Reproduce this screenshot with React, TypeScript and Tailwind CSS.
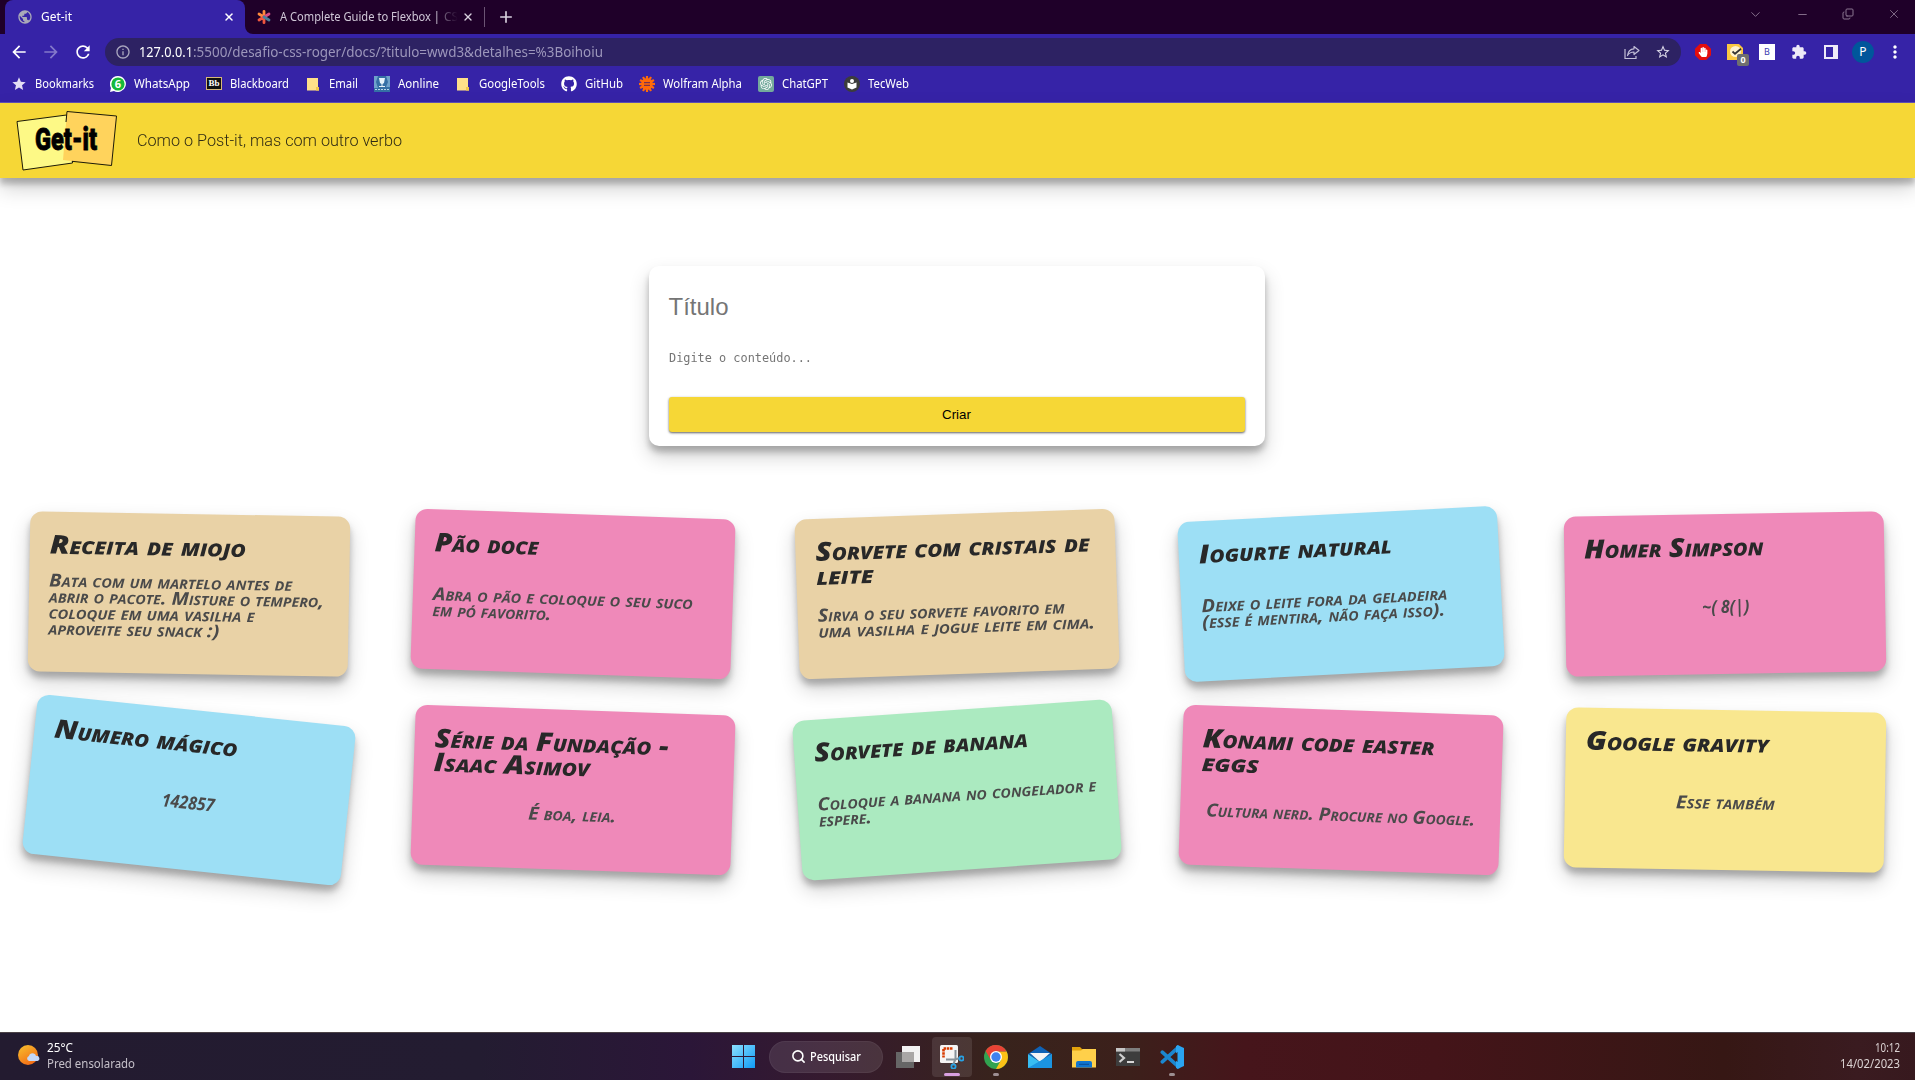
import { useLayoutEffect, useRef, useState, type ReactNode } from "react";
import { MdArrowBack, MdArrowForward, MdExtension, MdInfoOutline, MdMoreVert, MdPublic, MdRefresh, MdStar, MdStarBorder } from "react-icons/md";
import { FaGithub, FaHandPaper } from "react-icons/fa";
import { SiOpenai } from "react-icons/si";
import { ChevronDown, Copy, Minus, Plus, Search, X } from "lucide-react";

/** One line of text stretched or squeezed to an exact width. */
function Fit({ w, children, className = "" }: { w: number; children: ReactNode; className?: string }) {
  const ref = useRef<HTMLSpanElement>(null);
  const [scale, setScale] = useState(1);
  useLayoutEffect(() => {
    if (ref.current) setScale(w / parseFloat(getComputedStyle(ref.current).width));
  }, [w]);
  return (
    <span className={"block shrink-0 whitespace-pre " + className} style={{ width: w }}>
      <span ref={ref} className="inline-block origin-left" style={{ transform: `scaleX(${scale})` }}>
        {children}
      </span>
    </span>
  );
}

type Line = [string, number];

const notes: { bg: string; rot: string; title: Line[]; body: Line[] }[] = [
  {
    bg: "bg-[#e9d2a6]", rot: "rotate-[1deg]",
    title: [["Receita de miojo", 196]],
    body: [["Bata com um martelo antes de", 243], ["abrir o pacote. Misture o tempero,", 275], ["coloque em uma vasilha e", 206], ["aproveite seu snack :)", 171]],
  },
  {
    bg: "bg-[#ef89b9]", rot: "rotate-[2deg]",
    title: [["Pão doce", 104]],
    body: [["Abra o pão e coloque o seu suco", 260], ["em pó favorito.", 119]],
  },
  {
    bg: "bg-[#e9d2a6]", rot: "rotate-[-2deg]",
    title: [["Sorvete com cristais de", 274], ["leite", 57]],
    body: [["Sirva o seu sorvete favorito em", 247], ["uma vasilha e jogue leite em cima.", 277]],
  },
  {
    bg: "bg-[#9ddff5]", rot: "rotate-[-3deg]",
    title: [["Iogurte natural", 193]],
    body: [["Deixe o leite fora da geladeira", 246], ["(esse é mentira, não faça isso).", 243]],
  },
  {
    bg: "bg-[#ef89b9]", rot: "rotate-[-1deg]",
    title: [["Homer Simpson", 179]],
    body: [["~( 8(|)", 47]],
  },
  {
    bg: "bg-[#9ddff5]", rot: "rotate-[6deg]",
    title: [["Numero mágico", 184]],
    body: [["142857", 53]],
  },
  {
    bg: "bg-[#ef89b9]", rot: "rotate-[2deg]",
    title: [["Série da Fundação -", 234], ["Isaac Asimov", 156]],
    body: [["É boa, leia.", 88]],
  },
  {
    bg: "bg-[#abeac0]", rot: "rotate-[-4deg]",
    title: [["Sorvete de banana", 214]],
    body: [["Coloque a banana no congelador e", 279], ["espere.", 53]],
  },
  {
    bg: "bg-[#ef89b9]", rot: "rotate-[2deg]",
    title: [["Konami code easter", 232], ["eggs", 57]],
    body: [["Cultura nerd. Procure no Google.", 269]],
  },
  {
    bg: "bg-[#f9e78f]", rot: "rotate-[1deg]",
    title: [["Google gravity", 183]],
    body: [["Esse também", 99]],
  },
];

const Folder = () => (
  <svg viewBox="0 0 16 16" className="size-4">
    <path d="M2 2h11v9.500l1 .5v2.500H2z" fill="#ffe08a" />
    <path d="M11 11h3v3.500h-3z" fill="#f3c84b" />
  </svg>
);

const Bolt = () => (
  <svg viewBox="0 0 16 16" className="size-4">
    <g fill="#ff6a0a">
      <circle cx="8" cy="8" r="5.900" />
      {[0, 30, 60, 90, 120, 150].map((a) => (
        <rect key={a} x="6.900" y="0" width="2.200" height="16" transform={`rotate(${a} 8 8)`} />
      ))}
    </g>
    <path d="M5 6.700h6M5 9.300h6" stroke="#5b2464" strokeWidth="1" />
  </svg>
);

const bookmarks: { label: string; w: number; icon: ReactNode }[] = [
  { label: "Bookmarks", w: 59, icon: <MdStar className="size-4 text-[#e4dff5]" /> },
  {
    label: "WhatsApp", w: 56,
    icon: (
      <svg viewBox="0 0 16 16" className="size-4">
        <path d="M8 0a8 8 0 1 1-4 15L0 16l1-4A8 8 0 0 1 8 0z" fill="#fff" />
        <circle cx="8" cy="8" r="6.600" fill="#17b939" />
        <text x="8" y="11.800" textAnchor="middle" fontSize="11" fontWeight="700" fill="#fff" fontFamily="Open Sans, sans-serif">6</text>
      </svg>
    ),
  },
  {
    label: "Blackboard", w: 59,
    icon: (
      <span className="flex h-[13px] w-4 items-center justify-center border border-[#d8b878] bg-[#101010] font-['Liberation_Serif',serif] text-[9px] leading-none font-bold text-white">Bb</span>
    ),
  },
  { label: "Email", w: 29, icon: <Folder /> },
  {
    label: "Aonline", w: 41,
    icon: (
      <svg viewBox="0 0 16 16" className="size-4">
        <rect width="16" height="16" fill="#356fa5" />
        <path d="M0 0h4L2 6 4 12H0zM12 0h4v11h-4l2-5z" fill="#6fa2cb" />
        <path d="M5 2h6l-1 5-1.500 1v2H11v1H5v-1h2.500V8L6 7z" fill="#e6f2fa" />
        <path d="M1 13.500h14" stroke="#b6d5ea" strokeDasharray="2 1" />
      </svg>
    ),
  },
  { label: "GoogleTools", w: 66, icon: <Folder /> },
  { label: "GitHub", w: 38, icon: <FaGithub className="size-4 text-white" /> },
  { label: "Wolfram Alpha", w: 79, icon: <Bolt /> },
  {
    label: "ChatGPT", w: 46,
    icon: (
      <span className="flex size-4 items-center justify-center rounded-[2px] bg-[#74aa9c]">
        <SiOpenai className="size-3 text-white" />
      </span>
    ),
  },
  {
    label: "TecWeb", w: 41,
    icon: (
      <svg viewBox="0 0 16 16" className="size-4">
        <circle cx="8" cy="8" r="8" fill="#3c3c3c" />
        <path d="M3.500 6.500 8 8l4.500-1.500v5L8 13.500l-4.500-2z" fill="#fff" />
        <circle cx="8" cy="5" r="2" fill="#fff" />
      </svg>
    ),
  },
];

function TabStrip() {
  return (
    <div className="flex h-[34px] bg-[#1f0029] pl-[5px] text-xs text-white">
      <div className="relative flex w-[240px] items-center rounded-t-lg bg-[#3623a7] pl-3">
        <MdPublic className="mr-2 size-4 text-[#a9a9b8]" />
        <Fit w={31}>Get-it</Fit>
        <X className="mr-2.5 ml-auto size-3" strokeWidth={3} />
        <svg viewBox="0 0 8 8" className="absolute right-[-8px] bottom-0 size-2">
          <path d="M0 0a8 8 0 0 0 8 8H0z" fill="#3623a7" />
        </svg>
      </div>
      <div className="flex items-center pl-[11px]">
        <svg viewBox="0 0 16 16" className="mr-2 size-4" fill="none" strokeWidth="2.800" strokeLinecap="round">
          <path d="M8 8V2.300M8 8 3 5" stroke="#ff8a3c" />
          <path d="M8 8 3 11M8 8v5.700" stroke="#f0573f" />
          <path d="m8 8 5-3" stroke="#d84b83" />
          <path d="m8 8 5 3" stroke="#4a7f99" />
        </svg>
        <div className="flex w-[183px] text-[#cfc6d6]">
          <Fit w={160}>A Complete Guide to Flexbox |</Fit>
          <span className="bg-linear-to-r from-[#8d8096] to-[#1f0029] bg-clip-text pl-1 text-transparent">CS</span>
        </div>
        <X className="mr-2.5 ml-[-1px] size-3 text-[#d8d0de]" strokeWidth={2.700} />
        <div className="h-5 w-px bg-[#6b5474]" />
        <Plus className="ml-3 size-[18px] text-[#d8d0de]" strokeWidth={2.200} />
      </div>
      <div className="mr-[14px] ml-auto flex items-center gap-[33px] pb-[6px] text-[#8b7691]">
        <ChevronDown className="size-[15px]" strokeWidth={1.500} />
        <Minus className="size-[13px]" strokeWidth={1.700} />
        <Copy className="size-[12px] -scale-x-100 rotate-180" strokeWidth={2} />
        <X className="size-[14px]" strokeWidth={1.500} />
      </div>
    </div>
  );
}

function Toolbar() {
  return (
    <div className="flex h-[36px] items-center bg-[#3623a7] pl-[9px] text-white">
      <MdArrowBack className="size-5" />
      <MdArrowForward className="ml-3 size-5 text-[#8479ca]" />
      <MdRefresh className="ml-3 size-5" />
      <div className="ml-3 flex h-7 w-[1576px] items-center rounded-full bg-[#2d2263] pl-[10px]">
        <MdInfoOutline className="mr-2 size-4 text-[#aaa7bf]" />
        <Fit w={54} className="text-sm">127.0.0.1</Fit>
        <Fit w={410} className="text-sm text-[#9c96bb]">:5500/desafio-css-roger/docs/?titulo=wwd3&amp;detalhes=%3Boihoiu</Fit>
        <svg viewBox="0 0 16 16" className="ml-auto size-4 text-[#c3bfd8]" fill="none" stroke="currentColor" strokeWidth="1.200">
          <path d="M1 5v9.500h11V12" />
          <path d="M10 2.500 15 6.500l-5 4V8C7 8 5 9 3.500 11.500 4 7.500 6.500 5 10 4.800z" strokeLinejoin="round" />
        </svg>
        <MdStarBorder className="mr-[10px] ml-[15px] size-4 text-[#dad7e8]" />
      </div>
      <div className="ml-[14px] flex size-4 items-center justify-center bg-[#e40d0d] [clip-path:polygon(30%_0,70%_0,100%_30%,100%_70%,70%_100%,30%_100%,0_70%,0_30%)]">
        <FaHandPaper className="size-[10px] text-white" />
      </div>
      <div className="relative ml-4 size-4">
        <svg viewBox="0 0 16 16" className="size-4">
          <path d="M0 0h12l4 4v12H0z" fill="#fbc842" />
          <circle cx="8.500" cy="7.500" r="5.500" fill="#fff3cf" />
          <path d="m5.500 7.500 2.500 2.300 6-5" fill="none" stroke="#333" strokeWidth="1.800" />
        </svg>
        <span className="absolute top-[10px] left-[10px] flex h-3 w-3 items-center justify-center rounded-[2px] bg-[#6f6f6f] text-[9px] font-bold">0</span>
      </div>
      <div className="ml-4 flex size-4 items-center justify-center bg-white text-[9px] text-[#3b3bb0]">B</div>
      <MdExtension className="ml-4 size-4 text-[#eeeaf8]" />
      <div className="ml-[17px] h-[14px] w-[14px] border-2 border-r-[5px] border-[#eeeaf8]" />
      <div className="ml-[14px] flex size-[22px] items-center justify-center rounded-full bg-[#00569b] text-xs">P</div>
      <MdMoreVert className="ml-[11px] size-5" />
    </div>
  );
}

function Logo() {
  return (
    <svg viewBox="0 0 102 62" className="h-[62px] w-[102px]">
      <path d="M1 12.500 50.500 6 56.500 54 7 61z" fill="#fdf986" stroke="#1c1a08" strokeWidth="1" />
      <path d="M51 2.500 100.500 7 95.500 56.500 47 51z" fill="#ffd35c" />
      <path d="M50 13 51 2.500 100.500 7 95.500 56.500 56 52.300" fill="none" stroke="#1c1a08" strokeWidth="1" />
      <text x="19" y="41" textLength="62" lengthAdjust="spacingAndGlyphs" fontFamily="Roboto, sans-serif" fontWeight="900" fontSize="32" fill="#000" stroke="#000" strokeWidth=".8">Get-it</text>
    </svg>
  );
}

function Note({ note }: { note: (typeof notes)[number] }) {
  return (
    <div
      className={
        "flex h-40 flex-col rounded-xl px-5 pt-5 pb-[21px] font-['Open_Sans',sans-serif] italic shadow-[0_10px_20px_rgba(0,0,0,0.19),0_6px_6px_rgba(0,0,0,0.23)] [font-variant-caps:small-caps] " +
        note.bg + " " + note.rot
      }
    >
      <h3 className="text-[26px] leading-6 font-extrabold text-[#282828]">
        {note.title.map(([t, w]) => <Fit key={t} w={w}>{t}</Fit>)}
      </h3>
      <div className="flex flex-1 items-center justify-center">
        <div className={"text-lg leading-4 font-bold text-[#4a4a4a] " + (note.body.length > 1 ? "w-full" : "")}>
          {note.body.map(([t, w]) => <Fit key={t} w={w}>{t}</Fit>)}
        </div>
      </div>
    </div>
  );
}

const TaskApp = ({ children, dot = false }: { children: ReactNode; dot?: boolean }) => (
  <div className="relative flex h-10 w-11 items-center justify-center">
    {children}
    {dot && <span className="absolute bottom-[1px] h-[3px] w-1.5 rounded-full bg-[#9d8f92]" />}
  </div>
);

function Taskbar() {
  return (
    <footer className="grid h-12 grid-cols-[1fr_auto_1fr] items-center border-t border-[#4b4247] bg-[linear-gradient(90deg,#231b30_0%,#231c31_25%,#2b1638_36%,#351a2f_43%,#38231c_52%,#3c201b_59%,#46151b_65%,#441419_75%,#361714_90%,#3a1b20_97%,#37191e_100%)] text-xs text-white">
      <div className="flex items-center pb-0.5 pl-[18px]">
        <svg viewBox="0 0 22 22" className="mr-[7px] size-[22px]">
          <defs>
            <linearGradient id="sun" x1="0" y1="0" x2=".6" y2="1">
              <stop stopColor="#f7c22f" />
              <stop offset="1" stopColor="#f36d16" />
            </linearGradient>
          </defs>
          <circle cx="10" cy="10" r="10" fill="url(#sun)" />
          <path d="M11 16a2.600 2.600 0 0 1 0-5 3.600 3.600 0 0 1 7 0 2.500 2.500 0 0 1 1.500 5z" fill="#c5d8f7" />
        </svg>
        <div className="leading-4">
          <Fit w={26}>25°C</Fit>
          <Fit w={88} className="text-[#c5c0c9]">Pred ensolarado</Fit>
        </div>
      </div>
      <div className="flex items-center">
        <TaskApp>
          <svg viewBox="0 0 23 23" className="size-[23px]">
            <defs>
              <linearGradient id="win" x1="0" y1="0" x2="1" y2="1">
                <stop stopColor="#8be0ff" />
                <stop offset="1" stopColor="#109bf5" />
              </linearGradient>
            </defs>
            <path d="M0 0h11v11H0zM12 0h11v11H12zM0 12h11v11H0zM12 12h11v11H12z" fill="url(#win)" />
          </svg>
        </TaskApp>
        <div className="mx-[3px] flex h-8 w-[114px] items-center rounded-full border border-white/5 bg-white/10 pl-[21px]">
          <Search className="mr-1 size-[15px]" strokeWidth={2.500} />
          <Fit w={51} className="font-medium">Pesquisar</Fit>
        </div>
        <TaskApp>
          <svg viewBox="0 0 24 24" className="size-6">
            <path d="M6 1h18v16H6z" fill="#f2f2f2" />
            <path d="M0 7h18v16H0z" fill="#666" />
            <path d="M6 7h12v10H6z" fill="#a9a7a6" />
          </svg>
        </TaskApp>
        <div className="relative mx-0.5 flex size-10 items-center justify-center rounded bg-white/10">
          <svg viewBox="0 0 24 24" className="size-6" fill="none">
            <rect width="18" height="18" rx="1.500" fill="#f5f5f5" />
            <path d="M12.500 3.500h-9v9" stroke="#d83b01" strokeWidth="2.600" strokeDasharray="2.500 .7" />
            <path d="M15.500 5v9l-2.500 6M6 14.500h9l5-1.500" stroke="#88939b" strokeWidth="2" />
            <circle cx="21.500" cy="13.500" r="2.100" stroke="#27a3e6" strokeWidth="1.800" />
            <circle cx="13.500" cy="21.500" r="2.100" stroke="#27a3e6" strokeWidth="1.800" />
          </svg>
          <span className="absolute bottom-[1px] h-[3px] w-4 rounded-full bg-[#d9a0e0]" />
        </div>
        <TaskApp dot>
          <svg viewBox="0 0 24 24" className="size-6">
            <circle cx="12" cy="12" r="12" fill="#31a350" />
            <path d="M12 6.500h10.600A12 12 0 0 1 12 24l5-9z" fill="#fbc116" />
            <path d="M12 6.500h10.600A12 12 0 0 0 1.600 6l5.200 9z" fill="#e94335" />
            <circle cx="12" cy="12" r="6" fill="#fff" />
            <circle cx="12" cy="12" r="4.700" fill="#3f82ee" />
          </svg>
        </TaskApp>
        <TaskApp>
          <svg viewBox="0 0 24 24" className="size-6">
            <path d="M0 9 12 1l12 8-12 8z" fill="#0f62b5" />
            <path d="M2 8h20l-10 9z" fill="#f4f4f4" />
            <path d="M0 9l12 8 12-8v14H0z" fill="#38bdf2" />
            <path d="M0 23 24 9v14z" fill="#1b94e0" />
          </svg>
        </TaskApp>
        <TaskApp>
          <svg viewBox="0 0 24 24" className="size-6">
            <path d="M0 2h8l2 2h14v6H0z" fill="#e2a20c" />
            <path d="M0 5.500h9L11 4h13v18.500H0z" fill="#ffd04a" />
            <path d="M4 22.500V18a2 2 0 0 1 2-2h12a2 2 0 0 1 2 2v4.500z" fill="#1175cf" />
            <path d="M7 19.300h10" stroke="#0a4d94" />
          </svg>
        </TaskApp>
        <TaskApp>
          <svg viewBox="0 0 24 24" className="size-6">
            <path d="M0 3h24v18H0z" fill="#3d3d3d" />
            <path d="M0 3h24v3.500H0z" fill="#7e7e7e" />
            <path d="M0 3h9v3.500H0z" fill="#c5c5c5" />
            <path d="m3.500 9 4.500 4-4.500 4" fill="none" stroke="#d0d0d0" strokeWidth="2.200" />
            <path d="M11 17h7" stroke="#fff" strokeWidth="1.600" />
          </svg>
        </TaskApp>
        <TaskApp dot>
          <svg viewBox="0 0 24 24" className="size-6">
            <path d="m2.300 7.200 16 14.500M2.300 16.800l16-14.500" stroke="#1b87d0" strokeWidth="3.600" strokeLinecap="round" />
            <path d="M17.500 0 24 3v18l-6.500 3-1.500-1.200V1.200z" fill="#2aa5f2" />
            <path d="M17.500 7v10l-6-5z" fill="#39201d" />
          </svg>
        </TaskApp>
      </div>
      <div className="flex flex-col items-end pr-[15px] pb-0.5 leading-4 text-[#dcd3d3]">
        <Fit w={25}>10:12</Fit>
        <Fit w={60}>14/02/2023</Fit>
      </div>
    </footer>
  );
}

export default function App() {
  return (
    <div className="flex h-[1080px] w-[1915px] flex-col overflow-hidden bg-white font-['Noto_Sans','Open_Sans',sans-serif]">
      <TabStrip />
      <Toolbar />
      <nav className="flex h-[33px] gap-4 border-b border-[#6251b8] bg-[#3623a7] pb-[5px] pl-[11px] text-xs text-white">
        {bookmarks.map((b) => (
          <div key={b.label} className="flex items-center gap-2">
            {b.icon}
            <Fit w={b.w}>{b.label}</Fit>
          </div>
        ))}
      </nav>
      <main className="flex flex-1 flex-col">
        <header className="flex h-[75px] items-center bg-[#f6d736] pl-4 font-['Roboto',sans-serif] text-[#2e2a14] shadow-[0_10px_20px_rgba(0,0,0,0.19),0_6px_6px_rgba(0,0,0,0.23)]">
          <div className="pb-0.5">
            <Logo />
          </div>
          <Fit w={265} className="ml-[19px] text-base font-light">Como o Post-it, mas com outro verbo</Fit>
        </header>
        <div className="flex flex-col pr-0.5">
          <form className="mx-auto mt-[88px] flex h-[180px] w-[616px] flex-col rounded-[10px] bg-white px-5 font-['Liberation_Sans',sans-serif] text-[#757575] shadow-[0_10px_20px_rgba(0,0,0,0.19),0_6px_6px_rgba(0,0,0,0.23)]">
            <div className="mt-[27px] text-2xl leading-7">Título</div>
            <Fit w={143} className="mt-[29px] font-['DejaVu_Sans_Mono',monospace] text-xs leading-4">Digite o conteúdo...</Fit>
            <button type="button" className="mt-[31px] h-[35px] rounded-[3px] bg-[#f6d736] text-[13.333px] text-black shadow-[0_1px_3px_rgba(0,0,0,0.3),0_1px_2px_rgba(0,0,0,0.4)]">
              Criar
            </button>
          </form>
          <section className="mt-[68px] grid grid-cols-[repeat(5,320px)] justify-center gap-x-16 gap-y-9">
            {notes.map((n) => <Note key={n.title[0][0]} note={n} />)}
          </section>
        </div>
      </main>
      <Taskbar />
    </div>
  );
}
